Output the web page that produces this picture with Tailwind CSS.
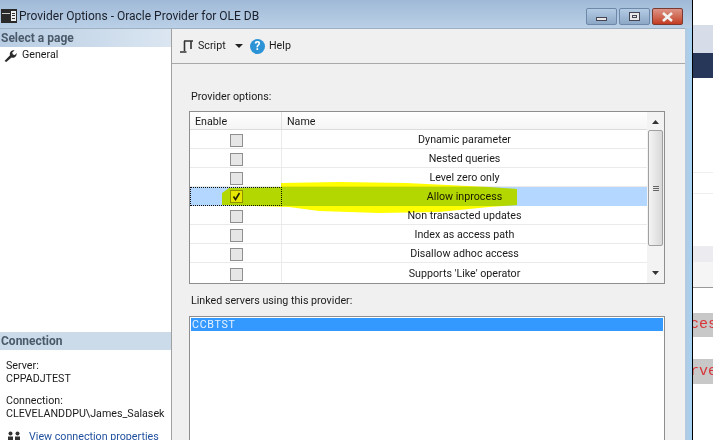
<!DOCTYPE html>
<html lang="en">
<head>
    <meta charset="UTF-8">
    <title>Provider Options</title>
    <script src="https://cdn.jsdelivr.net/npm/@tailwindcss/browser@4"></script>
</head>
<body class="w-[713px] h-[440px] overflow-hidden bg-white font-['Roboto',sans-serif] text-[10.7px] text-[#1a1a1a]">
<div class="flex h-[440px]">

    <!-- Dialog window -->
    <div class="w-[692px] shrink-0 h-full flex flex-col bg-[#b9d0e8]">

        <!-- Title bar -->
        <div class="h-[28px] shrink-0 flex items-center bg-gradient-to-b from-[#a0b9d6] to-[#bad0e7] relative">
            <svg class="ml-[1px] mt-[4px]" width="16" height="14" viewBox="0 0 16 14">
                <rect x="0" y="0" width="16" height="14" fill="#2a2a2a"/>
                <rect x="1" y="4" width="8" height="1" fill="#ccc"/>
                <rect x="10" y="2" width="5" height="10" fill="#eee"/>
                <rect x="11" y="4" width="3" height="1" fill="#333"/>
                <rect x="11" y="6" width="3" height="1" fill="#333"/>
                <rect x="11" y="9" width="3" height="1" fill="#333"/>
            </svg>
            <span class="ml-[2px] mt-[4px] text-[12px] text-[#1a1f2a]">Provider Options - Oracle Provider for OLE DB</span>
            <div class="absolute left-[586px] top-[8px] flex gap-[2px]">
                <div class="w-[31px] h-[17px] rounded-[2px] border border-[#6d88a8] bg-gradient-to-b from-[#b4cbe4] to-[#8ca8c6] flex items-end justify-center pb-[3px]">
                    <div class="w-[11px] h-[4px] bg-[#e8e8e8] border border-[#445]"></div>
                </div>
                <div class="w-[31px] h-[17px] rounded-[2px] border border-[#6d88a8] bg-gradient-to-b from-[#b4cbe4] to-[#8ca8c6] flex items-center justify-center">
                    <div class="w-[11px] h-[9px] bg-[#e8e8e8] border border-[#445] flex items-center justify-center"><div class="w-[5px] h-[3px] border border-[#445]"></div></div>
                </div>
                <div class="w-[31px] h-[17px] rounded-[2px] border border-[#7a3a30] bg-gradient-to-b from-[#dc9386] to-[#c23a1e] flex items-center justify-center">
                    <svg width="13" height="10" viewBox="0 0 13 10"><path d="M2 1l9 8M11 1l-9 8" stroke="#f2f2f2" stroke-width="2.6"/></svg>
                </div>
            </div>
        </div>

        <!-- Body and right window frame -->
        <div class="flex-1 min-h-0 flex">
        <div class="flex-1 min-w-0 flex bg-[#f0f0f0] border-t border-[#9fb0c2]">

            <!-- Left panel -->
            <div class="w-[172px] shrink-0 h-full bg-white border-r border-[#a0a0a0] flex flex-col overflow-hidden">
                <div class="h-[18px] pl-[1px] text-[12px] font-bold text-[#4a5a6a] bg-gradient-to-r from-[#b8cde3] to-[#dbe6f1] leading-[18px]">Select a page</div>
                <div class="h-[16px] flex items-center pl-[3px]">
                    <svg width="14" height="13" viewBox="0 0 14 13"><path d="M1.5 12L7 6.2C6.3 3.5 8.3 1 11.5 1.4L9.2 3.6l.7 2 2 .5 1.8-2.2C14 7.5 11 9.4 8.6 8.4L3.3 13z" fill="#2c2c2c"/></svg>
                    <span class="ml-[5px]">General</span>
                </div>
                <div class="flex-1"></div>
                <div class="h-[108px] shrink-0 flex flex-col">
                    <div class="h-[18px] shrink-0 pl-[1px] text-[12px] font-bold text-[#4a5a6a] bg-[#ccdbe9] leading-[18px]">Connection</div>
                    <div class="h-[70px] shrink-0 pl-[6px] pt-[9px] leading-[13px] whitespace-nowrap">
                        <p>Server:</p>
                        <p>CPPADJTEST</p>
                        <p class="mt-[9px]">Connection:</p>
                        <p>CLEVELANDDPU\James_Salasek</p>
                    </div>
                    <div class="h-[20px] shrink-0 pl-[7px] pt-[10px] flex items-start whitespace-nowrap">
                        <svg class="mt-[1px]" width="15" height="11" viewBox="0 0 15 11"><circle cx="3.5" cy="2.5" r="2" fill="#333"/><circle cx="10.5" cy="2.5" r="2" fill="#333"/><rect x="1" y="5.5" width="5" height="5" fill="#333"/><rect x="8" y="5.5" width="5" height="5" fill="#333"/></svg>
                        <a class="ml-[7px] text-[#1f4f9e] leading-[13px]">View connection properties</a>
                    </div>
                </div>
            </div>

            <!-- Right panel -->
            <div class="flex-1 min-w-0 h-full flex flex-col">
                <div class="h-[35px] shrink-0 flex items-center pl-[7px] border-b border-[#a8a8a8]">
                    <svg width="15" height="15" viewBox="0 0 15 15"><path d="M5 2h9M5.5 2v10M12 2v8M1 13h6.5" stroke="#333" stroke-width="1.6" fill="none"/></svg>
                    <span class="ml-[4px] w-[28px]">Script</span>
                    <svg class="ml-[9px]" width="8" height="4" viewBox="0 0 8 4"><path d="M0 0h8L4 4z" fill="#222"/></svg>
                    <div class="ml-[7px] w-[15px] h-[15px] rounded-full bg-[#2b93d6] text-white font-bold text-[12px] leading-[15px] text-center">?</div>
                    <span class="ml-[4px]">Help</span>
                </div>

                <div class="flex-1 min-h-0 pl-[17px] pr-[20px]">
                    <p class="pt-[26px] pl-[2px] leading-[13px]">Provider options:</p>

                    <!-- Options grid -->
                    <div class="mt-[8px] border border-[#8e8e8e] bg-white h-[173px] flex">
                        <div class="relative flex-1 min-w-0 flex flex-col">
                            <div class="h-[18px] flex border-b border-[#dcdcdc] bg-gradient-to-b from-white to-[#f5f5f5] leading-[19px]">
                                <div class="w-[92px] pl-[5px] border-r border-[#e2e2e2]">Enable</div>
                                <div class="pl-[5px]">Name</div>
                            </div>
                            <div class="h-[19px] flex border-b border-[#eaeaea]"><div class="w-[92px] pt-[3px] pl-[1px] flex items-center justify-center border-r border-[#eaeaea]"><div class="w-[13px] h-[13px] border border-[#8f8f8f] bg-[#e6e6e6]"></div></div><div class="flex-1 flex items-center justify-center pt-[3px]">Dynamic parameter</div></div>
                            <div class="h-[19px] flex border-b border-[#eaeaea]"><div class="w-[92px] pt-[3px] pl-[1px] flex items-center justify-center border-r border-[#eaeaea]"><div class="w-[13px] h-[13px] border border-[#8f8f8f] bg-[#e6e6e6]"></div></div><div class="flex-1 flex items-center justify-center pt-[3px]">Nested queries</div></div>
                            <div class="h-[19px] flex border-b border-[#eaeaea]"><div class="w-[92px] pt-[3px] pl-[1px] flex items-center justify-center border-r border-[#eaeaea]"><div class="w-[13px] h-[13px] border border-[#8f8f8f] bg-[#e6e6e6]"></div></div><div class="flex-1 flex items-center justify-center pt-[3px]">Level zero only</div></div>
                            <!-- selected row -->
                            <div class="h-[19px] flex bg-[#b3d7ff]">
                                <div class="w-[92px] pl-[1px] flex items-center justify-center border border-dotted border-[#111]"><div class="w-[13px] h-[13px] border border-[#8f8f8f] bg-[#e6e6e6] flex items-center justify-center"><svg width="9" height="9" viewBox="0 0 9 9"><path d="M1.5 4.5l2 3 4-6.5" stroke="#222" stroke-width="1.6" fill="none"/></svg></div></div>
                                <div class="flex-1 flex items-center justify-center pt-[2px]">Allow inprocess</div>
                            </div>
                            <div class="h-[19px] flex border-b border-[#eaeaea]"><div class="w-[92px] pt-[3px] pl-[1px] flex items-center justify-center border-r border-[#eaeaea]"><div class="w-[13px] h-[13px] border border-[#8f8f8f] bg-[#e6e6e6]"></div></div><div class="flex-1 flex items-center justify-center pt-[3px]">Non transacted updates</div></div>
                            <div class="h-[19px] flex border-b border-[#eaeaea]"><div class="w-[92px] pt-[3px] pl-[1px] flex items-center justify-center border-r border-[#eaeaea]"><div class="w-[13px] h-[13px] border border-[#8f8f8f] bg-[#e6e6e6]"></div></div><div class="flex-1 flex items-center justify-center pt-[3px]">Index as access path</div></div>
                            <div class="h-[19px] flex border-b border-[#eaeaea]"><div class="w-[92px] pt-[3px] pl-[1px] flex items-center justify-center border-r border-[#eaeaea]"><div class="w-[13px] h-[13px] border border-[#8f8f8f] bg-[#e6e6e6]"></div></div><div class="flex-1 flex items-center justify-center pt-[3px]">Disallow adhoc access</div></div>
                            <div class="h-[19px] flex"><div class="w-[92px] pt-[3px] pl-[1px] flex items-center justify-center border-r border-[#eaeaea]"><div class="w-[13px] h-[13px] border border-[#8f8f8f] bg-[#e6e6e6]"></div></div><div class="flex-1 flex items-center justify-center pt-[3px]">Supports 'Like' operator</div></div>

                            <!-- yellow marker scribble, multiplied over the rows -->
                            <svg class="absolute left-0 top-0 mix-blend-multiply pointer-events-none" width="457" height="160" viewBox="191 112 457 160">
                                <path d="M223 193L230 188L282 187L282 183L340 182L407 183L490 187L518 189L518 205L490 207L440 212L380 213L320 211L290 207L223 205Z" fill="#ffff00"/>
                            </svg>
                        </div>
                        <!-- Scrollbar -->
                        <div class="w-[17px] shrink-0 bg-[#f3f3f3] flex flex-col items-center">
                            <svg class="mt-[8px]" width="7" height="4" viewBox="0 0 7 4"><path d="M0 4h7L3.5 0z" fill="#333"/></svg>
                            <div class="mt-[6px] w-[15px] h-[116px] rounded-[2px] border border-[#a0a0a0] bg-gradient-to-r from-[#f4f4f4] to-[#d8d8d8] flex flex-col items-center justify-center gap-[1px]">
                                <div class="w-[6px] h-[1px] bg-[#666]"></div><div class="w-[6px] h-[1px] bg-[#666]"></div><div class="w-[6px] h-[1px] bg-[#666]"></div>
                            </div>
                            <svg class="mt-[25px]" width="7" height="4" viewBox="0 0 7 4"><path d="M0 0h7L3.5 4z" fill="#333"/></svg>
                        </div>
                    </div>

                    <p class="mt-[10px] pl-[2px] leading-[13px]">Linked servers using this provider:</p>

                    <!-- Linked servers list -->
                    <div class="mt-[9px] h-[140px] border border-[#8e8e8e] bg-white p-[1px]">
                        <div class="h-[13px] bg-[#3399ff] text-[#e8f2ff] pl-[1px] leading-[13px] tracking-[0.7px]">CCBTST</div>
                    </div>
                </div>
            </div>
        </div>
        <div class="w-[7px] shrink-0 bg-gradient-to-r from-[#b5c9e0] to-[#a4d2f4]"></div>
        </div>
    </div>

    <!-- Other app behind the dialog -->
    <div class="flex-1 min-w-0 h-full border-l border-black flex flex-col overflow-hidden font-['Liberation_Mono',monospace] text-[15px] text-[#d9363a]">
        <div class="h-[25px] shrink-0 bg-white"></div>
        <div class="h-[28px] shrink-0 bg-[#d6dce8]"></div>
        <div class="h-[25px] shrink-0 bg-[#27375a]"></div>
        <div class="h-[95px] shrink-0 bg-white border-b border-[#eeeeee]"></div>
        <div class="h-[21px] shrink-0 bg-white border-b border-[#eeeeee]"></div>
        <div class="h-[52px] shrink-0 bg-white"></div>
        <div class="h-[16px] shrink-0 bg-[#ececf0]"></div>
        <div class="h-[26px] shrink-0 bg-[#f5f5f5] border-b border-[#999999]"></div>
        <div class="h-[25px] shrink-0 bg-white"></div>
        <div class="h-[24px] shrink-0 bg-[#c8c8c8] leading-[24px] whitespace-nowrap -indent-[3px]">ces</div>
        <div class="h-[22px] shrink-0 bg-white"></div>
        <div class="h-[25px] shrink-0 bg-[#c8c8c8] leading-[25px] whitespace-nowrap -indent-[3px]">rve</div>
    </div>
</div>
</body>
</html>
